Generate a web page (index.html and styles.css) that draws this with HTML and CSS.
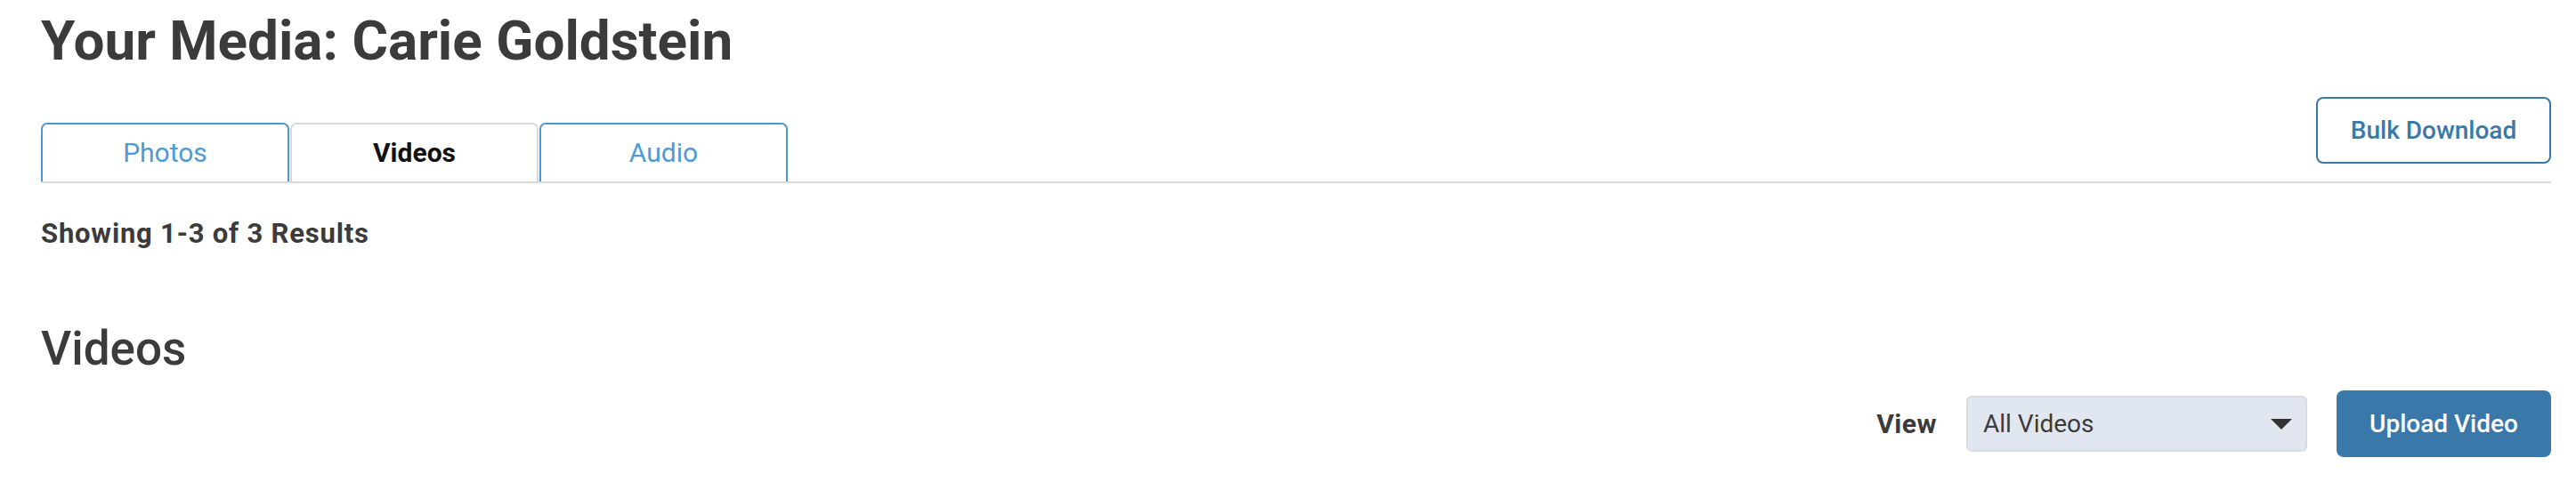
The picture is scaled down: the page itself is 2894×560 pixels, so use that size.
FILE: index.html
```html
<!DOCTYPE html>
<html lang="en">
<head>
<meta charset="utf-8">
<title>Your Media: Carie Goldstein</title>
<link rel="stylesheet" href="styles.css">
</head>
<body>
<main class="page">
  <h1 class="title">Your Media: Carie Goldstein</h1>
  <div class="tabbar">
    <nav class="tabs">
      <a class="tab">Photos</a>
      <a class="tab active">Videos</a>
      <a class="tab">Audio</a>
    </nav>
    <button class="btn btn-outline">Bulk Download</button>
  </div>
  <p class="results">Showing 1-3 of 3 Results</p>
  <h2 class="section-title">Videos</h2>
  <div class="controls">
    <span class="view-label">View</span>
    <div class="select">
      <span class="select-value">All Videos</span>
      <svg class="select-arrow" width="24" height="12" viewBox="0 0 24 12"><polygon points="0,0 24,0 12,12" fill="#333"/></svg>
    </div>
    <button class="btn btn-primary">Upload Video</button>
  </div>
</main>
</body>
</html>
```
FILE: styles.css
```css
* { box-sizing: border-box; }
html, body { margin: 0; padding: 0; background: #fff; }
body {
  font-family: Roboto, "Noto Sans", Arial, sans-serif;
  color: #3b3b3b;
}
.page {
  padding: 0 28px 0 46px;
}
.title {
  margin: 15px 0 0;
  font-size: 62px;
  line-height: 62px;
  font-weight: 700;
  color: #3b3b3b;
  white-space: nowrap;
}
.tabbar {
  margin-top: 32px;
  display: flex;
  align-items: flex-end;
  justify-content: space-between;
  border-bottom: 2px solid #d9d9d9;
}
.tabs {
  display: flex;
  gap: 1px;
}
.tab {
  width: 279px;
  height: 66px;
  border: 2px solid #4a97d3;
  border-bottom: none;
  border-radius: 7px 7px 0 0;
  display: flex;
  align-items: center;
  justify-content: center;
  padding-bottom: 2px;
  font-size: 30px;
  color: #4c9ad6;
  white-space: nowrap;
}
.tab.active {
  border-color: #d9d9d9;
  color: #111;
  font-weight: 700;
}
.btn {
  font-family: inherit;
  font-size: 28px;
  font-weight: 500;
  height: 75px;
  border-radius: 8px;
  padding: 0;
  display: flex;
  align-items: center;
  justify-content: center;
  white-space: nowrap;
}
.btn-outline {
  width: 264px;
  margin-bottom: 20px;
  background: #fff;
  border: 2px solid #3b78aa;
  color: #3b78aa;
}
.btn-primary {
  width: 241px;
  background: #3b78aa;
  border: none;
  color: #fff;
}
.results {
  margin: 41px 0 0;
  font-size: 31px;
  line-height: 31px;
  letter-spacing: 0.8px;
  font-weight: 700;
  color: #3b3b3b;
  white-space: nowrap;
}
.section-title {
  margin: 88px 0 0;
  font-size: 53px;
  line-height: 53px;
  font-weight: 500;
  color: #3b3b3b;
}
.controls {
  margin-top: 20px;
  display: flex;
  align-items: center;
  justify-content: flex-end;
  gap: 33px;
}
.view-label {
  font-size: 30px;
  font-weight: 700;
  letter-spacing: 0.5px;
  color: #3b3b3b;
}
.select {
  width: 383px;
  height: 63px;
  background: #e1e7f1;
  border: 2px solid #d8dbe0;
  border-radius: 6px;
  display: flex;
  align-items: center;
  justify-content: space-between;
  padding: 0 15px 0 17px;
}
.select-value {
  font-size: 28px;
  color: #3b3b3b;
  white-space: nowrap;
}
.select-arrow { display: block; }
```
